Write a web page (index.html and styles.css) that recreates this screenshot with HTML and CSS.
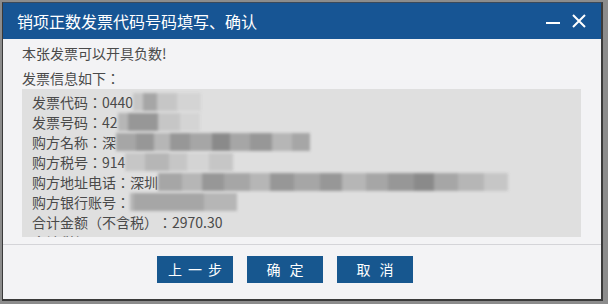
FILE: index.html
```html
<!DOCTYPE html>
<html lang="zh-CN">
<head>
<meta charset="utf-8">
<title>销项正数发票代码号码填写、确认</title>
<link rel="stylesheet" href="styles.css">
</head>
<body>
<div class="dialog">
  <div class="titlebar">
    <span class="title">销项正数发票代码号码填写、确认</span>
    <div class="controls">
      <svg class="ico-min" width="14" height="14" viewBox="0 0 14 14"><path d="M0 8 H14" stroke="#fff" stroke-width="2"/></svg>
      <svg class="ico-close" width="14" height="14" viewBox="0 0 14 14"><path d="M1 1 L13 13 M13 1 L1 13" stroke="#fff" stroke-width="2"/></svg>
    </div>
  </div>
  <div class="content">
    <div class="line first">本张发票可以开具负数!</div>
    <div class="line second">发票信息如下：</div>
    <div class="info">
      <div class="row">发票代码：0440<span class="mosaic"><i class="g1 w10"></i><i class="g3 w14"></i><i class="g1 w20"></i><i class="g0 w24"></i></span></div>
      <div class="row">发票号码：42<span class="mosaic"><i class="g2 w10"></i><i class="g4 w30"></i><i class="g1 w22"></i><i class="g0 w20"></i></span></div>
      <div class="row">购方名称：深<span class="mosaic"><i class="g3 w20"></i><i class="g4 w18"></i><i class="g2 w16"></i><i class="g4 w20"></i><i class="g3 w22"></i><i class="g5 w18"></i><i class="g3 w20"></i><i class="g4 w22"></i><i class="g2 w20"></i><i class="g3 w18"></i></span></div>
      <div class="row">购方税号：914<span class="mosaic"><i class="g1 w20"></i><i class="g2 w24"></i><i class="g1 w18"></i><i class="g0 w22"></i><i class="g1 w24"></i></span></div>
      <div class="row">购方地址电话：深圳<span class="mosaic"><i class="g3 w24"></i><i class="g2 w20"></i><i class="g4 w22"></i><i class="g3 w26"></i><i class="g2 w20"></i><i class="g4 w24"></i><i class="g3 w26"></i><i class="g4 w22"></i><i class="g2 w24"></i><i class="g3 w22"></i><i class="g4 w26"></i><i class="g5 w20"></i><i class="g3 w24"></i><i class="g2 w26"></i><i class="g1 w24"></i></span></div>
      <div class="row">购方银行账号：<span class="mosaic"><i class="g2 w4"></i><i class="g3 w30"></i><i class="g3 w40"></i><i class="g2 w33"></i></span></div>
      <div class="row">合计金额（不含税）：2970.30</div>
      <div class="row">合计税额：89.11</div>
    </div>
  </div>
  <div class="footer">
    <button class="btn three">上一步</button>
    <button class="btn two">确定</button>
    <button class="btn two">取消</button>
  </div>
</div>
</body>
</html>
```
FILE: styles.css
```css
html, body {
  margin: 0;
  padding: 0;
}
body {
  background: #8c8c8c;
  padding: 2px 0 0 2px;
  height: 304px;
  box-sizing: border-box;
  overflow: hidden;
  font-family: "Noto Sans CJK JP", "Noto Sans CJK SC", "Noto Sans", sans-serif;
  font-feature-settings: "locl" 0;
  text-spacing-trim: space-all;
}
.dialog {
  width: 601px;
  height: 299px;
  box-sizing: border-box;
  border-top: 1px solid #3c4a5a;
  border-left: 1px solid #3a3a3a;
  border-right: 2px solid #3a3a3a;
  border-bottom: 2px solid #3a3a3a;
  background: #f3f3f5;
  display: flex;
  flex-direction: column;
}
.titlebar {
  height: 36px;
  background: #175594;
  display: flex;
  align-items: center;
  justify-content: space-between;
  padding: 0 15px 0 14px;
  flex: none;
}
.title {
  color: #ffffff;
  font-size: 16px;
  line-height: 20px;
}
.controls {
  display: flex;
  align-items: center;
  gap: 12px;
}
.ico-min { margin-top: 1px; }
.content {
  height: 205px;
  box-sizing: border-box;
  padding: 4px 20px 7px 19px;
  flex: none;
  color: #4a4a4a;
  font-size: 14px;
}
.line {
  line-height: 20px;
  height: 20px;
}
.second {
  margin-top: 5px;
}
.info {
  margin-top: 1px;
  height: 148px;
  box-sizing: border-box;
  background: #dfdfdf;
  padding: 3px 10px 0 10px;
  overflow: hidden;
}
.row {
  line-height: 20px;
  height: 20px;
  white-space: nowrap;
}
.mosaic {
  display: inline-flex;
  vertical-align: top;
  height: 18px;
  margin-top: 1px;
  filter: blur(1.4px);
}
.mosaic i {
  display: block;
  height: 100%;
}
.g0 { background: #d4d4d4; }
.g1 { background: #c6c6c6; }
.g2 { background: #b6b6b6; }
.g3 { background: #a6a6a6; }
.g4 { background: #979797; }
.g5 { background: #8a8a8a; }
.w4 { width: 4px; }
.w10 { width: 10px; }
.w14 { width: 14px; }
.w16 { width: 16px; }
.w18 { width: 18px; }
.w20 { width: 20px; }
.w22 { width: 22px; }
.w24 { width: 24px; }
.w26 { width: 26px; }
.w30 { width: 30px; }
.w33 { width: 33px; }
.w40 { width: 40px; }
.footer {
  flex: none;
  height: 55px;
  box-sizing: border-box;
  border-top: 1px solid #d4d4d8;
  padding: 11px 0 0 154px;
  display: flex;
  gap: 14px;
  align-items: flex-start;
}
.btn {
  width: 76px;
  height: 27px;
  border: none;
  margin: 0;
  background: #17578f;
  color: #ffffff;
  font-family: "Noto Sans CJK JP", "Noto Sans CJK SC", "Noto Sans", sans-serif;
  font-size: 14px;
  line-height: 27px;
}
.btn.three {
  letter-spacing: 6px;
  padding: 0 0 0 6px;
}
.btn.two {
  letter-spacing: 9px;
  padding: 0 0 0 9px;
}
```
